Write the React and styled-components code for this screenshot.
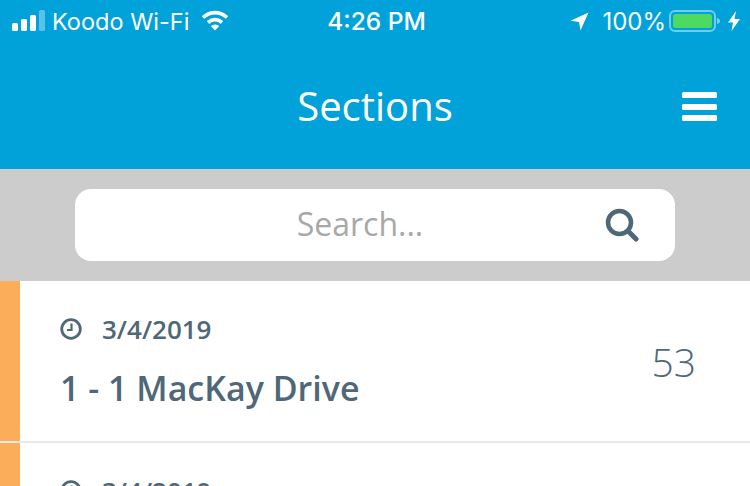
import React from "react";
import styled, { createGlobalStyle } from "styled-components";

const GlobalStyle = createGlobalStyle`
  html, body {
    margin: 0;
    padding: 0;
    background: #fff;
    overflow: hidden;
  }
  body {
    font-family: "Open Sans", "Liberation Sans", sans-serif;
  }
`;

const Page = styled.div`
  width: 750px;
  height: 486px;
  overflow: hidden;
`;

const Header = styled.header`
  height: 169px;
  background: #00a2d9;
  color: #fff;
`;

const StatusBar = styled.div`
  height: 42px;
  padding: 0 10px 0 12px;
  display: grid;
  grid-template-columns: 1fr auto 1fr;
  align-items: center;
  font-family: "Inter", "Liberation Sans", sans-serif;
`;

const StatusLeft = styled.div`
  display: flex;
  align-items: center;
  gap: 6px;
`;

const StatusRight = styled.div`
  display: flex;
  align-items: center;
  justify-content: flex-end;
  gap: 3px;
`;

const Carrier = styled.span`
  font-size: 23.5px;
  margin-right: 6px;
`;

const Clock = styled.span`
  font-size: 24.5px;
  font-weight: 500;
  padding-left: 1px;
`;

const Percent = styled.span`
  font-size: 24px;
  margin-left: 10px;
`;

const BoltSlot = styled.span`
  display: flex;
  margin-left: 4px;
`;

const TitleRow = styled.div`
  height: 127px;
  position: relative;
  display: flex;
  justify-content: center;
  padding-top: 37px;
  box-sizing: border-box;
`;

const Title = styled.h1`
  margin: 0;
  font-size: 40px;
  line-height: 54px;
  font-weight: 400;
`;

const MenuButton = styled.div`
  position: absolute;
  right: 33px;
  top: 50px;
  width: 35px;
  display: flex;
  flex-direction: column;
  gap: 5.5px;
`;

const MenuBar = styled.span`
  height: 6px;
  border-radius: 1.5px;
  background: #fff;
`;

const SearchBand = styled.div`
  height: 112px;
  box-sizing: border-box;
  background: #cccccc;
  padding: 20px 75px;
`;

const SearchBox = styled.div`
  height: 72px;
  background: #fff;
  border-radius: 16px;
  position: relative;
  display: flex;
  align-items: center;
  justify-content: center;
  padding: 0 30px 3px 0;
  box-sizing: border-box;
`;

const Placeholder = styled.span`
  font-size: 32px;
  line-height: 44px;
  color: #a8a8a8;
`;

const SearchIcon = styled.svg`
  position: absolute;
  right: 36px;
  top: 19px;
`;

const Row = styled.div`
  display: flex;
  border-bottom: 2px solid #e9e9e9;
  height: 162px;
  box-sizing: border-box;
  &:last-child {
    border-bottom: 0;
  }
`;

const Stripe = styled.div`
  width: 20px;
  flex-shrink: 0;
  background: ${(p) => p.$color};
`;

const RowBody = styled.div`
  flex: 1;
  display: flex;
  align-items: flex-start;
  justify-content: space-between;
  padding: 31px 54px 0 40px;
  color: #4e6878;
`;

const RowInfo = styled.div`
  display: flex;
  flex-direction: column;
  gap: 19px;
`;

const DateLine = styled.div`
  display: flex;
  align-items: center;
  gap: 20px;
  font-size: 26px;
  line-height: 34px;
  font-weight: 600;
`;

const Name = styled.div`
  font-size: 34px;
  line-height: 46px;
  font-weight: 600;
`;

const Count = styled.div`
  font-size: 39px;
  line-height: 52px;
  font-weight: 300;
  margin-top: 24px;
`;

const SignalBars = () => (
  <svg width="34" height="22" viewBox="0 0 34 22">
    <rect x="0" y="13" width="6" height="8" rx="1.5" fill="#fff" />
    <rect x="9" y="9" width="6" height="12" rx="1.5" fill="#fff" />
    <rect x="18" y="5" width="6" height="16" rx="1.5" fill="#fff" />
    <rect x="27" y="0" width="6" height="21" rx="1.5" fill="#fff" opacity="0.35" />
  </svg>
);

const WifiIcon = () => (
  <svg width="28" height="22" viewBox="0 0 28 22" fill="none">
    <path d="M2 7.500C9.500 1 18.500 1 26 7.500" stroke="#fff" strokeWidth="3.600" />
    <path d="M7 12.500C11.500 8.800 16.500 8.800 21 12.500" stroke="#fff" strokeWidth="3.600" />
    <path d="M9.800 16 14 20.500 18.200 16C15.600 14 12.400 14 9.800 16Z" fill="#fff" />
  </svg>
);

const LocationIcon = () => (
  <svg width="19" height="19" viewBox="0 0 19 19">
    <path d="M18.500 0.500 0.500 8.800 9 10 10.500 18.500Z" fill="#fff" />
  </svg>
);

const Battery = () => (
  <svg width="52" height="24" viewBox="0 0 52 24">
    <rect x="1" y="2" width="45" height="20" rx="5" fill="none" stroke="#fff" strokeOpacity="0.45" strokeWidth="2" />
    <rect x="4" y="5" width="39" height="14" rx="2.500" fill="#4cd964" />
    <path d="M48 9C50 9.500 51 10.500 51 12S50 14.500 48 15Z" fill="#fff" opacity="0.5" />
  </svg>
);

const BoltIcon = () => (
  <svg width="12" height="20" viewBox="0 0 12 20">
    <path d="M8 0 0 11.500H5L3.500 20 12 8H6.500Z" fill="#fff" />
  </svg>
);

const ClockIcon = () => (
  <svg width="22" height="22" viewBox="0 0 22 22" fill="none" stroke="#4e6878">
    <circle cx="11" cy="11" r="9.300" strokeWidth="2.800" />
    <path d="M11.500 5.500V12H7" strokeWidth="2.200" />
  </svg>
);

const sections = [
  { date: "3/4/2019", name: "1 - 1 MacKay Drive", count: 53 },
  { date: "3/4/2019", name: "1 - 1 MacKay Drive", count: 53 },
];

export default function App() {
  return (
    <Page>
      <GlobalStyle />
      <Header>
        <StatusBar>
          <StatusLeft>
            <SignalBars />
            <Carrier>Koodo Wi-Fi</Carrier>
            <WifiIcon />
          </StatusLeft>
          <Clock>4:26 PM</Clock>
          <StatusRight>
            <LocationIcon />
            <Percent>100%</Percent>
            <Battery />
            <BoltSlot>
              <BoltIcon />
            </BoltSlot>
          </StatusRight>
        </StatusBar>
        <TitleRow>
          <Title>Sections</Title>
          <MenuButton>
            <MenuBar />
            <MenuBar />
            <MenuBar />
          </MenuButton>
        </TitleRow>
      </Header>
      <SearchBand>
        <SearchBox>
          <Placeholder>Search...</Placeholder>
          <SearchIcon width="34" height="34" viewBox="0 0 34 34" fill="none" stroke="#4e6878">
            <circle cx="14.500" cy="14.500" r="11.500" strokeWidth="4.500" />
            <path d="M23 23 31 31" strokeWidth="5" strokeLinecap="round" />
          </SearchIcon>
        </SearchBox>
      </SearchBand>
      {sections.map((s, i) => (
        <Row key={i}>
          <Stripe $color="#fbad5a" />
          <RowBody>
            <RowInfo>
              <DateLine>
                <ClockIcon />
                {s.date}
              </DateLine>
              <Name>{s.name}</Name>
            </RowInfo>
            <Count>{s.count}</Count>
          </RowBody>
        </Row>
      ))}
    </Page>
  );
}
